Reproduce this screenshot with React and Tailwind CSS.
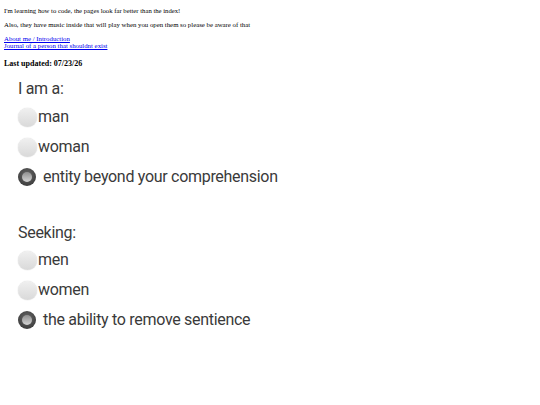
import React from "react";

function Radio({ checked }) {
  if (checked) {
    return (
      <span className="w-[18px] h-[18px] rounded-full bg-[radial-gradient(circle_at_50%_40%,#6a6a6a,#2e2e2e)] flex items-center justify-center shrink-0">
        <span className="w-[10px] h-[10px] rounded-full bg-[linear-gradient(to_bottom,#8f8f8f,#d4d4d4)]" />
      </span>
    );
  }
  return (
    <span className="w-[19px] h-[19px] rounded-full bg-[linear-gradient(to_bottom,#f0f0f0,#d9d9d9)] shrink-0 shadow-[0_0_1px_rgba(0,0,0,0.3)]" />
  );
}

function Option({ label, checked }) {
  return (
    <div className="flex items-center h-[30px]">
      <Radio checked={checked} />
      <span className={checked ? "ml-[7px]" : "ml-[1px]"}>{label}</span>
    </div>
  );
}

function Group({ title, options, titleClass }) {
  return (
    <div className="text-[16px] tracking-[-0.3px] text-[#3a3a3a] leading-none">
      <div className={`${titleClass} flex items-center`}>{title}</div>
      {options.map((o) => (
        <Option key={o.label} label={o.label} checked={o.checked} />
      ))}
    </div>
  );
}

export default function App() {
  return (
    <div className="w-[540px] h-[405px] bg-white px-[4px] pt-[7px] font-['Liberation_Serif',serif] text-black">
      <p className="text-[6.7px] leading-[8px]">I'm learning how to code, the pages look far better than the index!</p>
      <p className="text-[6.8px] leading-[8px] mt-[6px]">Also, they have music inside that will play when you open them so please be aware of that</p>
      <div className="mt-[6px] text-[6.8px] leading-[7px]">
        <a href="#" className="text-[#0000ee] underline block">About me / Introduction</a>
        <a href="#" className="text-[#0000ee] underline block">Journal of a person that shouldnt exist</a>
      </div>
      <p className="mt-[10px] text-[8px] font-bold leading-[10px]">Last updated: 07/23/26</p>
      <div className="pl-[14px] mt-[7px] font-['Roboto',sans-serif]">
        <Group
          title="I am a:"
          titleClass="h-[26px]"
          options={[
            { label: "man" },
            { label: "woman" },
            { label: "entity beyond your comprehension", checked: true },
          ]}
        />
        <div className="h-[29px]" />
        <Group
          title="Seeking:"
          titleClass="h-[24px]"
          options={[
            { label: "men" },
            { label: "women" },
            { label: "the ability to remove sentience", checked: true },
          ]}
        />
      </div>
    </div>
  );
}
